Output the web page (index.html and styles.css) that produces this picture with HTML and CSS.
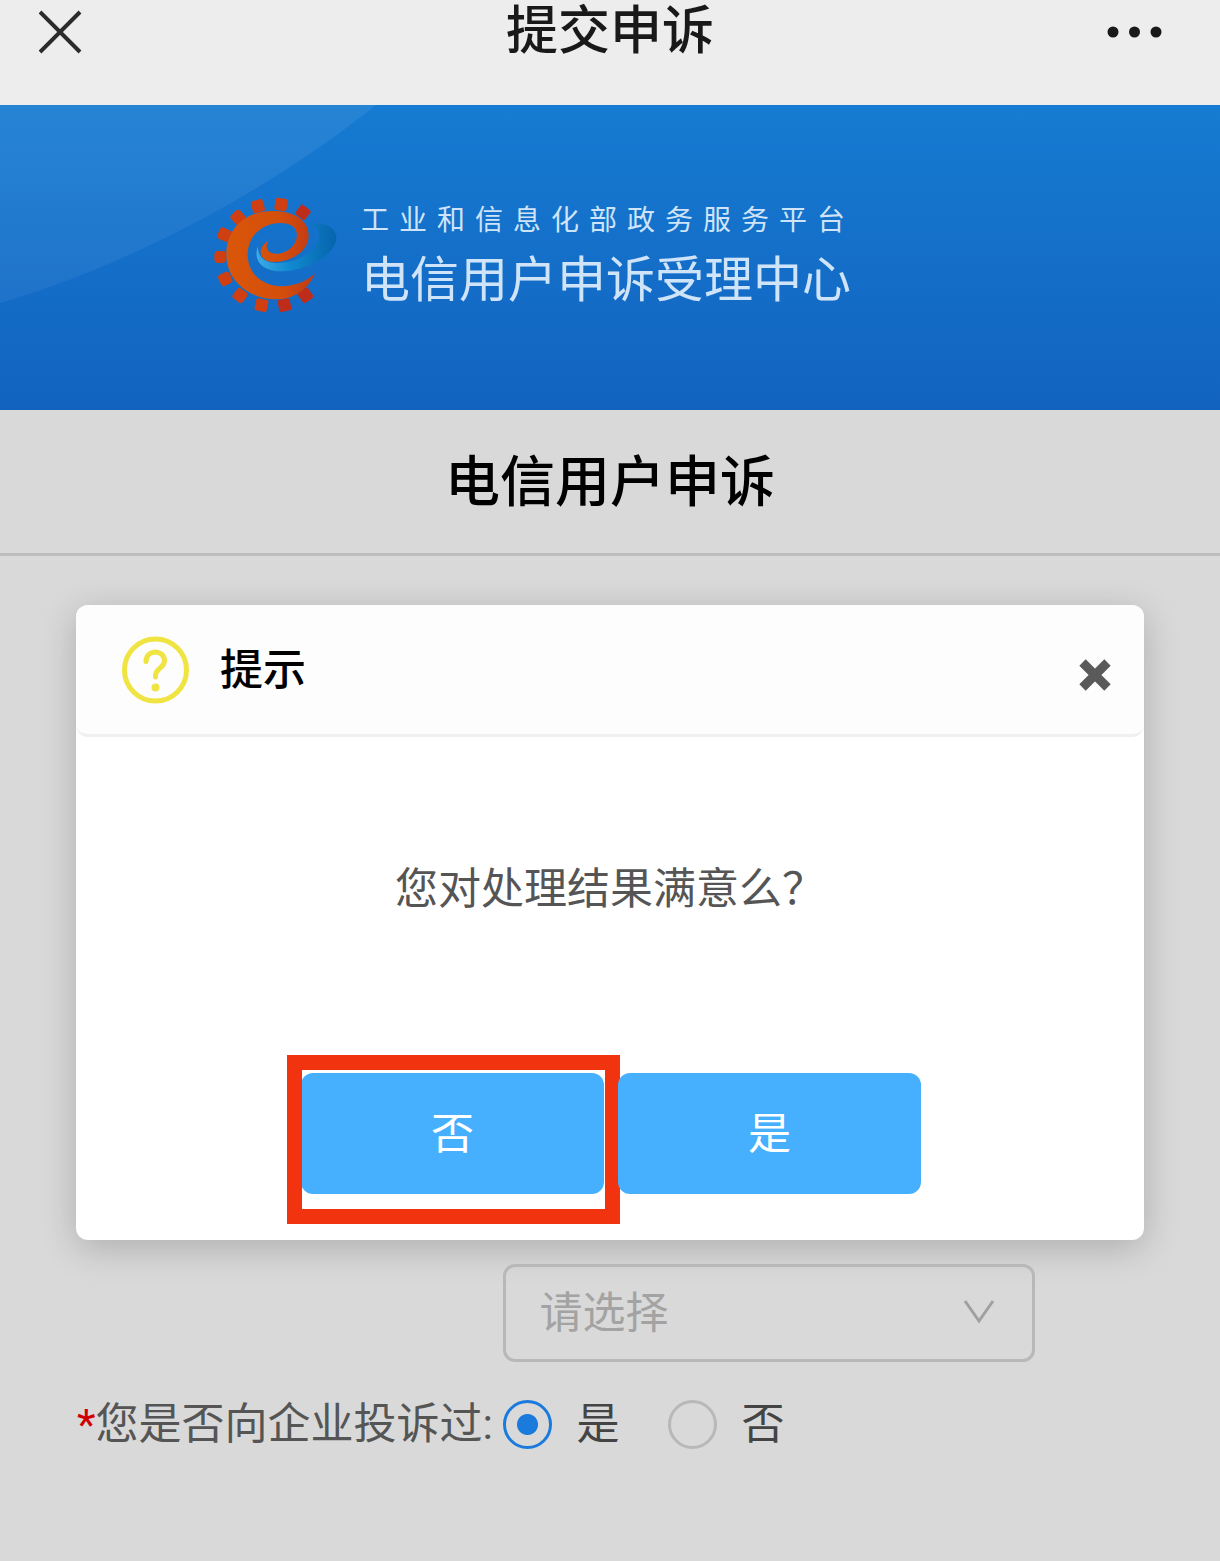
FILE: index.html
```
<!DOCTYPE html>
<html lang="zh-CN">
<head>
    <meta charset="UTF-8">
    <meta name="viewport" content="width=device-width, initial-scale=1.0">
    <title>提交申诉</title>
    <link rel="stylesheet" href="styles.css">
</head>
<body>
    <header class="nav-bar">
        <button class="nav-btn" type="button" aria-label="关闭">
            <svg width="44" height="44" viewBox="0 0 44 44" fill="none" stroke="#2b2b2b" stroke-width="4">
                <path d="M1 2L41 42M41 2L1 42"/>
            </svg>
        </button>
        <h1>提交申诉</h1>
        <button class="nav-btn nav-more" type="button" aria-label="更多">
            <svg width="56" height="12" viewBox="0 0 56 12" fill="#191919">
                <circle cx="6" cy="6" r="5.5"/>
                <circle cx="27.500" cy="6" r="5.5"/>
                <circle cx="49" cy="6" r="5.5"/>
            </svg>
        </button>
    </header>

    <div class="banner">
        <svg class="banner-curve" width="376" height="198" viewBox="0 0 376 198">
            <defs>
                <linearGradient id="shine" x1="0" y1="0" x2="0" y2="1">
                    <stop offset="0" stop-color="#fff" stop-opacity="0.07"/>
                    <stop offset="1" stop-color="#fff" stop-opacity="0.05"/>
                </linearGradient>
            </defs>
            <path d="M0 0H376C270 85 130 160 0 198Z" fill="url(#shine)"/>
        </svg>
        <svg class="logo" width="125" height="115" viewBox="70 50 375 345">
            <defs>
                <linearGradient id="orange" x1="0" y1="0" x2="1" y2="0">
                    <stop offset="0" stop-color="#d9560a"/>
                    <stop offset="0.6" stop-color="#d44f0a"/>
                    <stop offset="1" stop-color="#c03a18"/>
                </linearGradient>
                <linearGradient id="blue" x1="0" y1="0" x2="1" y2="0">
                    <stop offset="0" stop-color="#3cabe6"/>
                    <stop offset="0.4" stop-color="#118bd0"/>
                    <stop offset="1" stop-color="#0664ad"/>
                </linearGradient>
            </defs>
            <!-- gear teeth -->
            <g fill="#cf3f12">
                <rect x="256" y="54" width="37" height="37" rx="7" transform="rotate(10 274 72)"/>
                <rect x="186" y="59" width="37" height="37" rx="8" transform="rotate(-15 204 77)"/>
                <rect x="126" y="93" width="37" height="37" rx="10" transform="rotate(-42 144 111)"/>
                <rect x="85" y="145" width="37" height="37" rx="10" transform="rotate(-65 103 163)"/>
                <rect x="74" y="212" width="36" height="36" rx="12"/>
                <rect x="89" y="277" width="37" height="37" rx="10" transform="rotate(65 107 295)"/>
                <rect x="133" y="327" width="37" height="37" rx="8" transform="rotate(38 151 345)"/>
                <rect x="197" y="356" width="37" height="37" rx="6" transform="rotate(12 215 374)"/>
            </g>
            <g fill="#c02c1a">
                <rect x="322" y="78" width="36" height="36" rx="6" transform="rotate(38 340 96)"/>
                <rect x="266" y="356" width="37" height="37" rx="6" transform="rotate(-12 284 374)"/>
                <rect x="329" y="327" width="37" height="37" rx="7" transform="rotate(-35 347 345)"/>
            </g>
            <path fill="url(#blue)" d="M205 198C188 240 220 274 275 273C350 272 440 225 440 170C438 140 402 125 362 131C396 142 396 180 370 207C340 237 290 251 250 247C218 243 205 225 205 198Z"/>
            <path fill="url(#orange)" d="M376 279C358 322 318 357 262 357C176 357 110 300 110 222C110 145 168 92 246 92C318 92 357 122 357 166C357 214 300 246 252 245C204 243 202 200 236 181C222 205 238 223 266 220C300 216 326 188 321 157C316 130 282 124 250 130C202 140 172 180 174 228C178 288 226 319 280 318C320 316 352 302 376 279Z"/>
        </svg>
        <div class="banner-text">
            <p class="banner-sub">工业和信息化部政务服务平台</p>
            <p class="banner-title">电信用户申诉受理中心</p>
        </div>
    </div>

    <main>
        <h2 class="page-title">电信用户申诉</h2>

        <section class="modal" role="dialog" aria-labelledby="modalTitle">
            <div class="modal-header">
                <svg width="68" height="68" viewBox="0 0 68 68" fill="none" stroke="#f0e442" stroke-linecap="round">
                    <circle cx="34.500" cy="34" r="31" stroke-width="5"/>
                    <path d="M25 25.500C25 13 43.500 13 43.500 25C43.500 32 34.500 32 34.500 39.500V41" stroke-width="5"/>
                    <circle cx="34.500" cy="51.500" r="4" fill="#f0e442" stroke="none"/>
                </svg>
                <h3 id="modalTitle">提示</h3>
                <button class="modal-close" type="button" aria-label="关闭提示">
                    <svg width="32" height="32" viewBox="0 0 32 32" stroke="#5a5a5a" stroke-width="9">
                        <path d="M3.500 3.500L28.500 28.500M28.500 3.500L3.500 28.500"/>
                    </svg>
                </button>
            </div>
            <p class="modal-message">您对处理结果满意么？</p>
            <div class="modal-actions">
                <button class="btn highlighted" type="button">否</button>
                <button class="btn" type="button">是</button>
            </div>
        </section>

        <form class="complaint-form">
            <div class="form-row">
                <div class="select-box">
                    <select aria-label="请选择">
                        <option>请选择</option>
                    </select>
                    <svg class="arrow" width="32" height="24" viewBox="0 0 32 24" fill="none" stroke="#a0a0a0" stroke-width="3">
                        <path d="M2 1L16 21L30 1"/>
                    </svg>
                </div>
            </div>
            <div class="form-row" role="radiogroup" aria-labelledby="complained">
                <span class="form-label" id="complained"><span class="required">*</span>您是否向企业投诉过:</span>
                <div class="radios">
                    <label><input type="radio" name="complained" value="yes" checked>是</label>
                    <label><input type="radio" name="complained" value="no">否</label>
                </div>
            </div>
        </form>
    </main>
</body>
</html>
```
FILE: styles.css
```
:root {
    --page-bg: #d9d9d9;
    --line-color: #b8b8b8;
    --blue: #1a7bdc;
    --button-blue: #46b0ff;
    --text-color: #555;
}

* {
    margin: 0;
    padding: 0;
    box-sizing: border-box;
}

body {
    font-family: Roboto, "Noto Sans CJK SC", sans-serif;
    font-size: 43px;
    line-height: 64px;
    background-color: var(--page-bg);
    color: var(--text-color);
}

button, select {
    font: inherit;
    border: none;
    background: none;
    cursor: pointer;
}

svg {
    display: block;
}

/* Top bar */
.nav-bar {
    display: grid;
    grid-template-columns: 1fr auto 1fr;
    align-items: center;
    padding: 0 57px 41px 39px;
    background-color: #ededed;
}

.nav-bar h1 {
    padding-left: 18px;
    font-size: 52px;
    font-weight: 500;
    color: #191919;
}

.nav-more {
    justify-self: end;
}

/* Blue banner */
.banner {
    position: relative;
    display: flex;
    gap: 23px;
    height: 305px;
    padding: 92px 213px 0;
    background: linear-gradient(#167bd2, #1263c0);
    color: #cfe4f8;
}

.banner-curve {
    position: absolute;
    top: 0;
    left: 0;
}

.banner-sub {
    font-size: 28px;
    line-height: 48px;
    letter-spacing: 10px;
}

.banner-title {
    font-size: 49px;
    line-height: 72px;
}

.page-title {
    padding: 40px 0 39px;
    border-bottom: 3px solid #bdbdbd;
    font-size: 55px;
    font-weight: 500;
    text-align: center;
    color: #000;
}

/* Dialog */
.modal {
    margin: 49px 76px 24px;
    padding-bottom: 46px;
    background-color: #fff;
    border-radius: 12px;
    box-shadow: 0 8px 36px rgba(0, 0, 0, 0.2);
}

.modal-header {
    display: flex;
    align-items: center;
    gap: 31px;
    height: 132px;
    padding: 0 33px 0 45px;
    background-color: #fdfdfd;
    border-bottom: 3px solid #f0f0f0;
    border-radius: 12px;
}

.modal-header h3 {
    font-size: 43px;
    font-weight: 500;
    color: #000;
}

.modal-close {
    margin-left: auto;
    padding-top: 10px;
}

.modal-message {
    padding: 120px 0 152px;
    text-align: center;
}

.modal-actions {
    display: flex;
    justify-content: center;
    gap: 14px;
    padding-left: 2px;
}

.btn {
    position: relative;
    width: 303px;
    height: 121px;
    border-radius: 12px;
    background-color: var(--button-blue);
    color: #fff;
}

.highlighted::after {
    content: "";
    position: absolute;
    inset: -18px -16px -30px -14px;
    border: 15px solid #f23310;
}

/* Form */
.complaint-form {
    padding: 0 79px 80px 77px;
}

.form-row {
    display: grid;
    grid-template-columns: 40% 50%;
    align-items: center;
    margin-bottom: 30px;
}

.form-label {
    white-space: nowrap;
}

.required {
    color: #d00000;
}

.select-box {
    position: relative;
    grid-column: 2;
}

.select-box select {
    display: block;
    width: 100%;
    height: 98px;
    padding: 0 34px;
    border: 3px solid var(--line-color);
    border-radius: 12px;
    color: #a3a3a3;
    appearance: none;
}

.arrow {
    position: absolute;
    top: 36px;
    right: 40px;
    pointer-events: none;
}

.radios {
    display: flex;
    gap: 48px;
}

.radios label {
    display: flex;
    align-items: center;
    gap: 25px;
    color: #444;
}

.radios input {
    width: 49px;
    height: 49px;
    border: 3px solid var(--line-color);
    border-radius: 50%;
    appearance: none;
}

.radios input:checked {
    border-color: var(--blue);
    background: radial-gradient(circle, var(--blue) 10px, transparent 11px);
}
```
